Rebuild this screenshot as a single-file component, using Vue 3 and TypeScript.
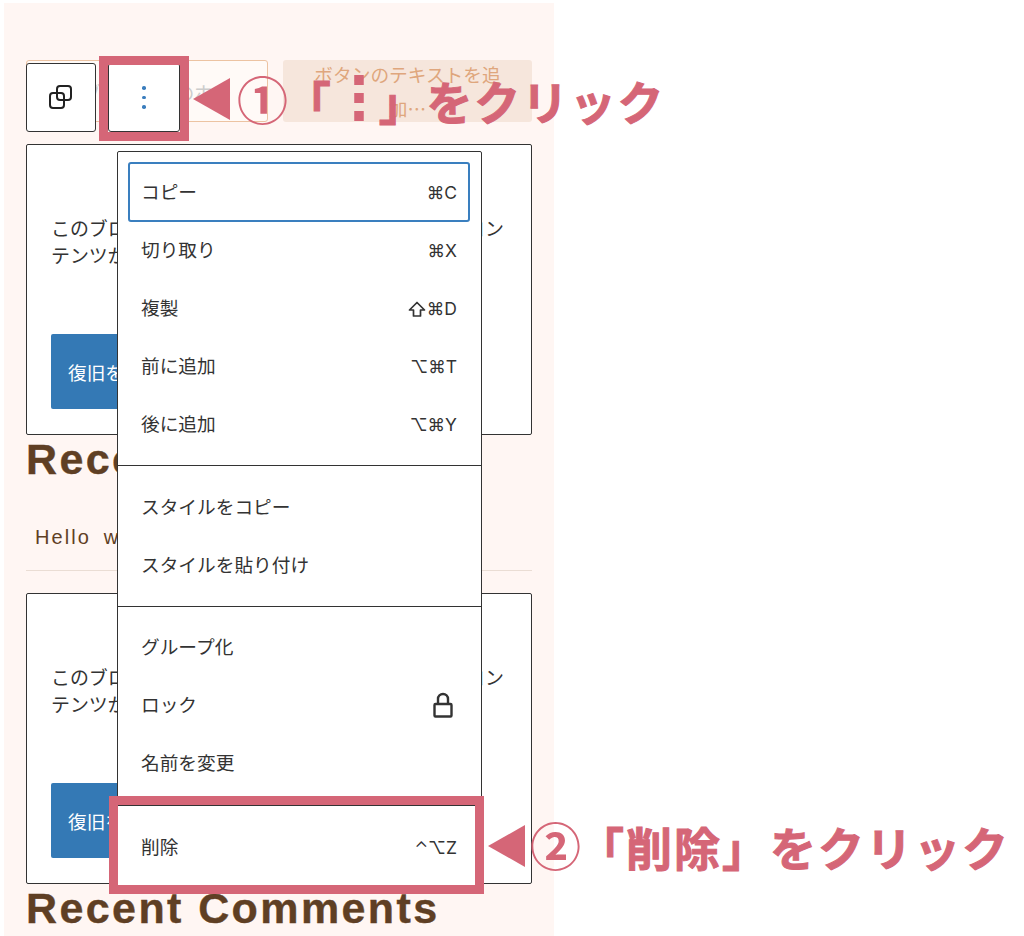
<template>
  <div class="page">
    <div class="pane">
      <div class="buttons">
        <div class="btn-outline">ブログ記事のホー</div>
        <div class="btn-fill">ボタンのテキストを追加…</div>
      </div>

      <template v-for="block in 2" :key="block">
        <div class="warning">
          <p>このブロックには想定されていないまたは無効なコンテンツが含まれています。</p>
          <div class="recover">復旧を試みる</div>
        </div>
        <h2>Recent Comments</h2>
        <template v-if="block === 1">
          <div class="comment">Hello world!</div>
        </template>
      </template>
    </div>

    <!-- block toolbar -->
    <div class="toolbar">
      <button class="tool tool-copy">
        <svg width="24" height="25" viewBox="0 0 24 25" fill="none" stroke="#222" stroke-width="2">
          <rect x="8" y="1" width="14" height="14" rx="3" />
          <rect x="1" y="8" width="14" height="15" rx="3" />
        </svg>
      </button>
      <button class="tool tool-more">
        <i></i><i></i><i></i>
      </button>
    </div>

    <!-- dropdown menu -->
    <div class="menu">
      <div v-for="(group, g) in menu" :key="g" class="group">
        <div v-for="item in group" :key="item.label" class="item" :class="{ focused: item.focused }">
          <span>{{ item.label }}</span>
          <span v-if="item.keys" class="keys">
            <svg v-if="item.shift" class="shift" width="18" height="17" viewBox="0 0 18 17" fill="none" stroke="#333" stroke-width="1.7" stroke-linejoin="round">
              <path d="M9 1.5 16.5 9H12.5V15H5.5V9H1.5Z" />
            </svg>{{ item.keys }}
          </span>
          <svg v-if="item.lock" class="lock" width="20" height="26" viewBox="0 0 20 26" fill="none" stroke="#333" stroke-width="2.4">
            <path d="M5 12V7a5 5 0 0 1 10 0v5" />
            <rect x="1.5" y="12" width="17" height="12.5" rx="1" />
          </svg>
        </div>
      </div>
    </div>

    <!-- annotations -->
    <div class="frame frame-more"></div>
    <div class="frame frame-delete"></div>
    <div class="arrow arrow-one"></div>
    <div class="arrow arrow-two"></div>
    <div class="note note-one"><span class="num">①</span>「<span class="dots">⋮</span>」をクリック</div>
    <div class="note note-two"><span class="num">②</span>「削除」をクリック</div>
  </div>
</template>

<script setup lang="ts">
interface MenuItem {
  label: string
  keys?: string
  shift?: boolean
  lock?: boolean
  focused?: boolean
}

const menu: MenuItem[][] = [
  [
    { label: 'コピー', keys: '⌘C', focused: true },
    { label: '切り取り', keys: '⌘X' },
    { label: '複製', keys: '⌘D', shift: true },
    { label: '前に追加', keys: '⌥⌘T' },
    { label: '後に追加', keys: '⌥⌘Y' },
  ],
  [{ label: 'スタイルをコピー' }, { label: 'スタイルを貼り付け' }],
  [{ label: 'グループ化' }, { label: 'ロック', lock: true }, { label: '名前を変更' }],
  [{ label: '削除', keys: '⌃⌥Z' }],
]
</script>

<style>
body {
  background: #fff;
}
</style>

<style scoped>
.page {
  position: relative;
  width: 1024px;
  height: 936px;
  overflow: hidden;
  font-family: "Noto Sans CJK JP", "Liberation Sans", sans-serif;
  color: #333;
}

.pane {
  box-sizing: border-box;
  width: 550px;
  height: 933px;
  position: relative;
  top: 3px;
  margin-left: 4px;
  padding: 57px 22px 0;
  background: #fff6f3;
}

.buttons {
  display: flex;
  gap: 15px;
  height: 62px;
  margin-bottom: 22px;
  font-size: 18.7px;
}

.btn-outline {
  box-sizing: border-box;
  flex: 0 0 242px;
  display: flex;
  align-items: center;
  padding-left: 55px;
  white-space: nowrap;
  background: #fffaf7;
  border: 1px solid #ecc3a2;
  border-radius: 3px;
  color: #ccc;
}

.btn-fill {
  flex: 1;
  display: flex;
  align-items: center;
  justify-content: center;
  text-align: center;
  line-height: 34px;
  padding: 0 24px;
  background: #f6e6dc;
  border-radius: 3px;
  color: #dfa67d;
}

.warning {
  box-sizing: border-box;
  height: 291px;
  padding: 69px 24px 0;
  background: #fff;
  border: 1px solid #333;
  border-radius: 2px;
}

.warning p {
  margin: 0 0 66px;
  font-size: 18.9px;
  line-height: 27px;
}

.recover {
  width: 260px;
  height: 75px;
  display: flex;
  align-items: center;
  padding-left: 17px;
  box-sizing: border-box;
  background: #3479b5;
  border-radius: 2px;
  color: #fff;
  font-size: 18.7px;
}

h2 {
  margin: 0;
  font-family: "Liberation Sans", Arial, sans-serif;
  font-size: 43px;
  line-height: 48px;
  font-weight: 700;
  letter-spacing: 2.4px;
  color: #5f3f24;
  -webkit-text-stroke: 0.4px #5f3f24;
}

.comment {
  height: 88px;
  box-sizing: border-box;
  padding: 40px 9px 0;
  margin-bottom: 22px;
  border-bottom: 1px solid #eaddd4;
  font-family: "Liberation Sans", Arial, sans-serif;
  font-size: 20px;
  line-height: 28px;
  letter-spacing: 2.1px;
  word-spacing: 5px;
  color: #5f3f24;
}

.toolbar {
  position: absolute;
  left: 26px;
  top: 63px;
  display: flex;
  gap: 12px;
}

.tool {
  box-sizing: border-box;
  height: 69px;
  display: flex;
  flex-direction: column;
  align-items: center;
  justify-content: center;
  padding: 0;
  background: #fff;
  border: 1px solid #333;
  border-radius: 3px;
}

.tool-copy {
  width: 70px;
}

.tool-more {
  width: 72px;
  gap: 6px;
}

.tool-more i {
  width: 3.5px;
  height: 3.5px;
  border-radius: 50%;
  background: #3a7dbd;
}

.menu {
  position: absolute;
  left: 117px;
  top: 151px;
  box-sizing: border-box;
  width: 365px;
  background: #fff;
  border: 1px solid #333;
  border-radius: 2px;
}

.group {
  padding: 12px 11px 12px 10px;
  border-bottom: 1px solid #333;
}

.group:nth-child(1) {
  padding-top: 11px;
}

.group:nth-child(3) {
  padding-top: 11px;
  padding-bottom: 13px;
}

.group:last-child {
  border-bottom: 0;
}

.item {
  box-sizing: border-box;
  height: 58px;
  display: flex;
  align-items: center;
  justify-content: space-between;
  padding: 0 13px;
  font-size: 18.7px;
  line-height: 26px;
}

.item > span:first-child {
  position: relative;
  top: -1px;
}

.item.focused {
  height: 60px;
  margin-block: -1px;
  padding: 0 11px;
  border: 2px solid #3a7fbf;
  border-radius: 3px;
}

.keys {
  display: flex;
  align-items: center;
  gap: 1px;
  font-family: "Inter", "DejaVu Sans", sans-serif;
  font-size: 17.5px;
  position: relative;
  top: 1px;
}

.lock {
  margin-right: 4px;
}

.frame {
  position: absolute;
  box-sizing: border-box;
  border: 9px solid #d56677;
}

.frame-more {
  left: 99px;
  top: 56px;
  width: 90px;
  height: 85px;
}

.frame-delete {
  left: 109px;
  top: 796px;
  width: 375px;
  height: 98px;
}

.arrow {
  position: absolute;
  width: 37px;
  background: #d56677;
  clip-path: polygon(0 50%, 100% 0, 100% 100%);
}

.arrow-one {
  left: 193px;
  top: 78px;
  height: 42px;
}

.arrow-two {
  left: 488px;
  top: 825px;
  height: 42px;
}

.note {
  position: absolute;
  white-space: nowrap;
  font-size: 46px;
  line-height: 60px;
  font-weight: 700;
  color: #d56677;
  -webkit-text-stroke: 1px #d56677;
}

.num {
  font-size: 51px;
  margin-right: -5px;
  -webkit-text-stroke: 0;
}

.dots {
  display: inline-block;
  width: 40px;
  height: 60px;
  margin-right: 6px;
  text-align: center;
  font-size: 52px;
  line-height: 48px;
  vertical-align: top;
  -webkit-text-stroke: 2.5px #d56677;
}

.note-one {
  left: 237px;
  top: 68px;
  letter-spacing: 1.8px;
}

.note-two {
  left: 530px;
  top: 814px;
  letter-spacing: 2px;
}
</style>
